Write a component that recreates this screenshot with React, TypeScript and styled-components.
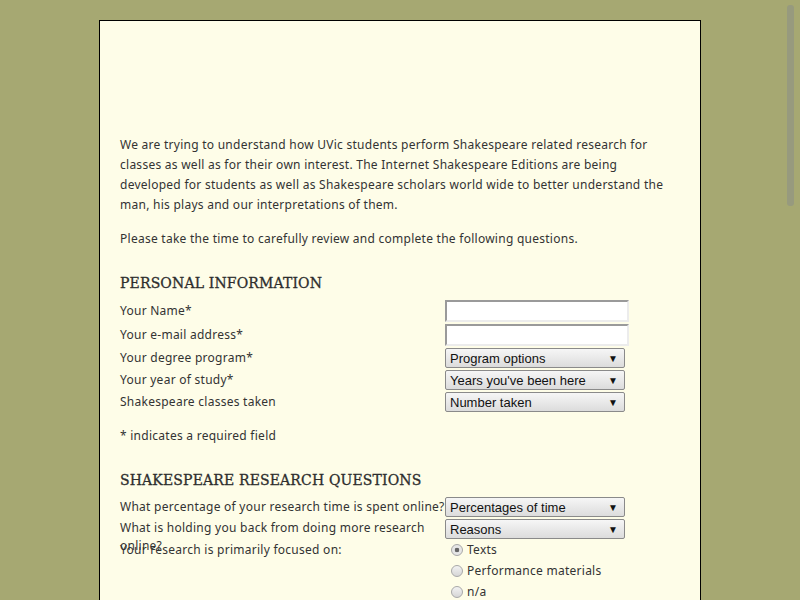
import { createGlobalStyle } from "styled-components";
import styled from "styled-components";

const GlobalStyle = createGlobalStyle`
  html, body {
    margin: 0;
    padding: 0;
    background: #a6a872;
    overflow: hidden;
  }
`;

const Page = styled.div`
  padding-top: 20px;
  height: 580px;
  font-family: "Noto Sans", "DejaVu Sans", sans-serif;
  font-size: 12px;
  letter-spacing: 0.26px;
  color: #333;
`;

const Sheet = styled.main`
  width: 560px;
  margin: 0 auto;
  padding: 114px 20px 40px;
  background: #fefde8;
  border: 1px solid #000;
`;

const Para = styled.p`
  margin: 0 0 14px;
  line-height: 20px;
`;

const Heading = styled.h2`
  margin: 24px 0 7px;
  font-family: "DejaVu Serif", "Liberation Serif", serif;
  font-size: 14px;
  font-weight: normal;
  letter-spacing: 0.15px;
  line-height: 20px;
  color: #2d2d2d;
  -webkit-text-stroke: 0.3px #2d2d2d;
`;

const Form = styled.div`
  display: grid;
  grid-template-columns: 325px 184px;
  row-gap: 2px;
`;

const Label = styled.div<{ $fixed?: boolean }>`
  line-height: ${(p) => (p.$fixed ? "18px" : "20px")};
  height: ${(p) => (p.$fixed ? "20px" : "auto")};
  align-self: ${(p) => (p.$fixed ? "start" : "center")};
  white-space: ${(p) => (p.$fixed ? "normal" : "nowrap")};
  padding-right: ${(p) => (p.$fixed ? "20px" : "0")};
`;

const TextInput = styled.input`
  box-sizing: border-box;
  width: 184px;
  height: 22px;
  margin: 0;
  border: 2px solid;
  border-color: #9a9a9a #ececec #ececec #9a9a9a;
  background: #fff;
`;

const SelectBox = styled.div`
  box-sizing: border-box;
  width: 180px;
  height: 20px;
  display: flex;
  align-items: center;
  justify-content: space-between;
  padding: 0 6px 0 4px;
  border: 1px solid #8a8a8a;
  border-radius: 2px;
  background: linear-gradient(#f6f6f6, #dcdcdc);
  font-family: "Liberation Sans", Arial, sans-serif;
  font-size: 13px;
  letter-spacing: 0;
  color: #111;
`;

const Arrow = styled.span`
  font-size: 10px;
`;

const Note = styled.p`
  margin: 14px 0 0;
  line-height: 20px;
`;

const Radios = styled.div`
  display: flex;
  flex-direction: column;
  margin-top: -2px;
  padding-left: 6px;
`;

const RadioRow = styled.label`
  display: flex;
  align-items: center;
  gap: 4px;
  height: 21px;
  line-height: 21px;
`;

const Dot = styled.span<{ $on?: boolean }>`
  box-sizing: border-box;
  width: 12px;
  height: 12px;
  border-radius: 50%;
  border: 1px solid #a8a8a8;
  background: ${(p) =>
    p.$on
      ? "radial-gradient(circle, #666 0 2px, #e6e6e6 2.6px)"
      : "linear-gradient(#f2f2f2, #d6d6d6)"};
`;

const Thumb = styled.div`
  position: fixed;
  top: 5px;
  right: 6px;
  width: 7px;
  height: 201px;
  border-radius: 3px;
  background: #979a7e;
`;

function Select({ text }: { text: string }) {
  return (
    <SelectBox>
      <span>{text}</span>
      <Arrow>▼</Arrow>
    </SelectBox>
  );
}

export default function App() {
  return (
    <Page>
      <GlobalStyle />
      <Sheet>
        <Para>
          We are trying to understand how UVic students perform Shakespeare related research for
          classes as well as for their own interest. The Internet Shakespeare Editions are being
          developed for students as well as Shakespeare scholars world wide to better understand the
          man, his plays and our interpretations of them.
        </Para>
        <Para>Please take the time to carefully review and complete the following questions.</Para>

        <Heading>PERSONAL INFORMATION</Heading>
        <Form>
          <Label>Your Name*</Label>
          <TextInput />
          <Label>Your e-mail address*</Label>
          <TextInput />
          <Label>Your degree program*</Label>
          <Select text="Program options" />
          <Label>Your year of study*</Label>
          <Select text="Years you've been here" />
          <Label>Shakespeare classes taken</Label>
          <Select text="Number taken" />
        </Form>
        <Note>* indicates a required field</Note>

        <Heading>SHAKESPEARE RESEARCH QUESTIONS</Heading>
        <Form>
          <Label>What percentage of your research time is spent online?</Label>
          <Select text="Percentages of time" />
          <Label $fixed>What is holding you back from doing more research online?</Label>
          <Select text="Reasons" />
          <Label $fixed>Your research is primarily focused on:</Label>
          <Radios>
            <RadioRow>
              <Dot $on /> Texts
            </RadioRow>
            <RadioRow>
              <Dot /> Performance materials
            </RadioRow>
            <RadioRow>
              <Dot /> n/a
            </RadioRow>
          </Radios>
        </Form>
      </Sheet>
      <Thumb />
    </Page>
  );
}
